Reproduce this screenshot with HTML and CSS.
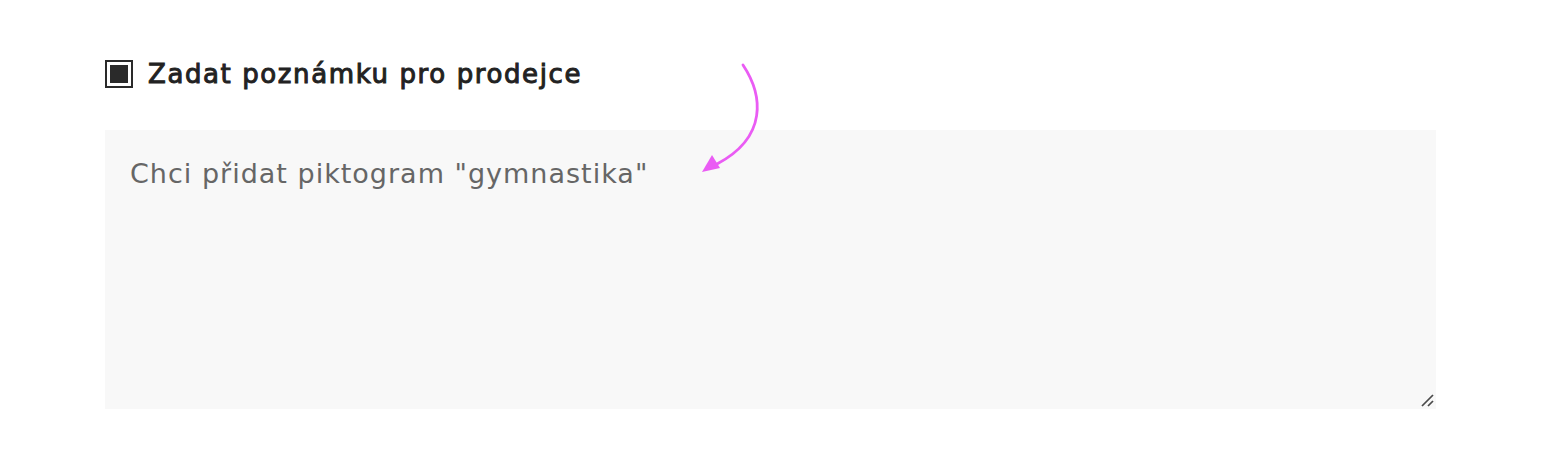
FILE: index.html
```html
<!DOCTYPE html>
<html lang="cs">
<head>
<meta charset="utf-8">
<link rel="stylesheet" href="styles.css">
</head>
<body>
<div class="page">
  <label class="check-row">
    <span class="checkbox"><span class="checkbox-fill"></span></span>
    <span class="check-label">Zadat poznámku pro prodejce</span>
  </label>
  <div class="note">
    <textarea class="note-input" placeholder="Chci přidat piktogram &quot;gymnastika&quot;"></textarea>
    <svg class="grip" width="14" height="14" viewBox="0 0 14 14">
      <line x1="2" y1="13" x2="13" y2="2" stroke="#4a4a4a" stroke-width="1.7"/>
      <line x1="8" y1="13" x2="13" y2="8" stroke="#4a4a4a" stroke-width="1.7"/>
    </svg>
  </div>
  <svg class="arrow" width="80" height="130" viewBox="0 0 80 130">
    <path d="M43 10 C63 40 68 82 17 109" fill="none" stroke="#ea5cf4" stroke-width="2.8" stroke-linecap="round"/>
    <polygon points="2,117 12,100 20,113" fill="#ea5cf4"/>
  </svg>
</div>
</body>
</html>
```
FILE: styles.css
```css
html, body {
  margin: 0;
  padding: 0;
  background: #ffffff;
}
.page {
  position: relative;
  padding: 59px 120px 0 105px;
  font-family: "DejaVu Sans", sans-serif;
}
.check-row {
  display: flex;
  align-items: center;
  gap: 15px;
  height: 29px;
}
.checkbox {
  box-sizing: border-box;
  width: 28px;
  height: 28px;
  border: 2px solid #2a2a2a;
  display: flex;
  align-items: center;
  justify-content: center;
}
.checkbox-fill {
  width: 18px;
  height: 18px;
  background: #2a2a2a;
}
.check-label {
  font-size: 26px;
  font-weight: 400;
  color: #222222;
  letter-spacing: 1.6px;
  -webkit-text-stroke: 1px #222222;
}
.note {
  position: relative;
  margin-top: 42px;
  width: 1331px;
}
.note-input {
  display: block;
  box-sizing: border-box;
  width: 1331px;
  height: 279px;
  border: none;
  outline: none;
  background: #f8f8f8;
  padding: 28px 25px;
  font-family: "DejaVu Sans", sans-serif;
  font-size: 27px;
  letter-spacing: 1px;
  color: #222;
  resize: none;
}
.note-input::placeholder {
  color: #666666;
  opacity: 1;
}
.grip {
  position: absolute;
  right: 2px;
  bottom: 2px;
}
.arrow {
  position: absolute;
  left: 700px;
  top: 55px;
  overflow: visible;
}
```
